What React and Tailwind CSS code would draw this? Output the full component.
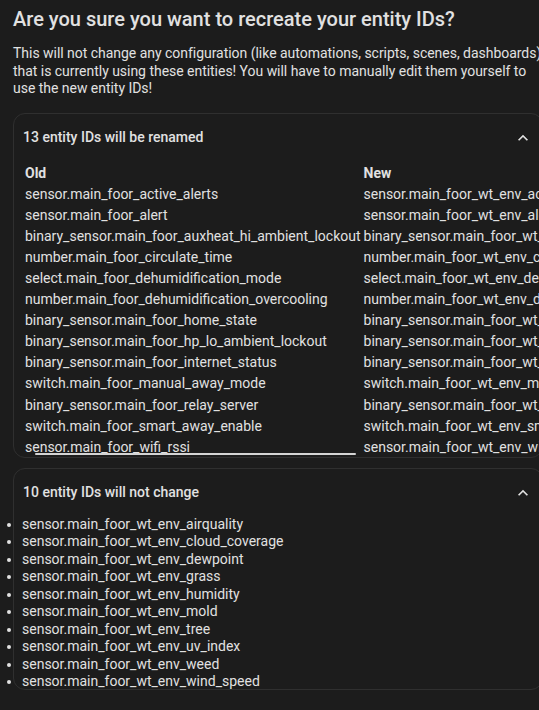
import React from 'react'

const RENAMES = [
  ['sensor.main_foor_active_alerts', 'sensor.main_foor_wt_env_active_alerts'],
  ['sensor.main_foor_alert', 'sensor.main_foor_wt_env_alert'],
  ['binary_sensor.main_foor_auxheat_hi_ambient_lockout', 'binary_sensor.main_foor_wt_env_auxheat_hi_ambient_lockout'],
  ['number.main_foor_circulate_time', 'number.main_foor_wt_env_circulate_time'],
  ['select.main_foor_dehumidification_mode', 'select.main_foor_wt_env_dehumidification_mode'],
  ['number.main_foor_dehumidification_overcooling', 'number.main_foor_wt_env_dehumidification_overcooling'],
  ['binary_sensor.main_foor_home_state', 'binary_sensor.main_foor_wt_env_home_state'],
  ['binary_sensor.main_foor_hp_lo_ambient_lockout', 'binary_sensor.main_foor_wt_env_hp_lo_ambient_lockout'],
  ['binary_sensor.main_foor_internet_status', 'binary_sensor.main_foor_wt_env_internet_status'],
  ['switch.main_foor_manual_away_mode', 'switch.main_foor_wt_env_manual_away_mode'],
  ['binary_sensor.main_foor_relay_server', 'binary_sensor.main_foor_wt_env_relay_server'],
  ['switch.main_foor_smart_away_enable', 'switch.main_foor_wt_env_smart_away_enable'],
  ['sensor.main_foor_wifi_rssi', 'sensor.main_foor_wt_env_wifi_rssi'],
]

const UNCHANGED = [
  'sensor.main_foor_wt_env_airquality',
  'sensor.main_foor_wt_env_cloud_coverage',
  'sensor.main_foor_wt_env_dewpoint',
  'sensor.main_foor_wt_env_grass',
  'sensor.main_foor_wt_env_humidity',
  'sensor.main_foor_wt_env_mold',
  'sensor.main_foor_wt_env_tree',
  'sensor.main_foor_wt_env_uv_index',
  'sensor.main_foor_wt_env_weed',
  'sensor.main_foor_wt_env_wind_speed',
]

function Chevron() {
  return (
    <svg viewBox="0 0 24 24" className="w-5 h-5 shrink-0" fill="#e1e1e1">
      <path d="M7.41,15.41L12,10.83L16.59,15.41L18,14L12,8L6,14L7.41,15.41Z" />
    </svg>
  )
}

function PanelHeader({ title }) {
  return (
    <div className="h-[48px] flex items-center justify-between pl-[9px] pr-[9px]">
      <span className="text-[14px] font-medium">{title}</span>
      <Chevron />
    </div>
  )
}

export default function App() {
  return (
    <div className="w-[539px] h-[710px] overflow-hidden bg-[#1c1c1c] text-[#e1e1e1]"
      style={{ fontFamily: 'Roboto, "Noto Sans", sans-serif' }}>
      <div className="w-[556px] px-[13px]">
        <h2 className="text-[20px] font-medium leading-[24px] pt-[7px] whitespace-nowrap">
          Are you sure you want to recreate your entity IDs?
        </h2>

        <p className="text-[14px] leading-[17.5px] mt-[14px] whitespace-nowrap tracking-[-0.03px]">
          This will not change any configuration (like automations, scripts, scenes, dashboards)<br />
          that is currently using these entities! You will have to manually edit them yourself to<br />
          use the new entity IDs!
        </p>

        {/* renamed */}
        <div className="relative mt-[15px] border border-[#2f2f2f] rounded-[12px] overflow-hidden h-[345px]">
          <PanelHeader title="13 entity IDs will be renamed" />
          <div className="pl-[11px] pt-[1px] overflow-hidden">
            <table className="text-[14px] leading-[21.1px] border-collapse whitespace-nowrap">
              <thead>
                <tr className="text-left font-bold">
                  <th className="font-bold pr-[3px]">Old</th>
                  <th className="font-bold">New</th>
                </tr>
              </thead>
              <tbody>
                {RENAMES.map(([o, n]) => (
                  <tr key={o}>
                    <td className="pr-[3px]">{o}</td>
                    <td>{n}</td>
                  </tr>
                ))}
              </tbody>
            </table>
          </div>
          <div className="absolute left-[21px] top-[339px] w-[321px] h-[2px] rounded-full bg-[#d4d4d4]" />
        </div>

        {/* unchanged */}
        <div className="mt-[10px] border border-[#2f2f2f] rounded-[12px] h-[222px]">
          <PanelHeader title="10 entity IDs will not change" />
          <ul className="list-disc pl-[8px] -mt-[1px] text-[14px] leading-[17.5px]">
            {UNCHANGED.map(u => <li key={u}>{u}</li>)}
          </ul>
        </div>
      </div>
    </div>
  )
}
